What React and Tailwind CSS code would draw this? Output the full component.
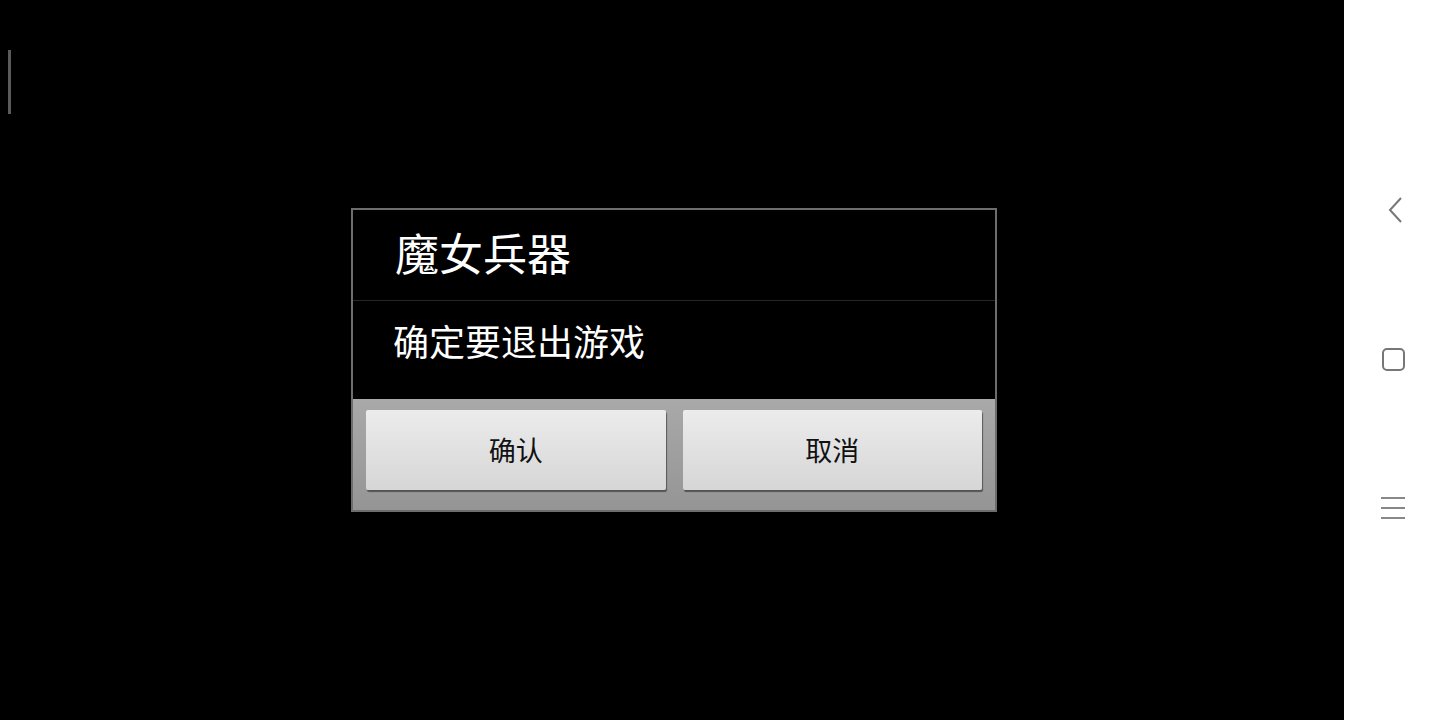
const font = { fontFamily: '"Noto Sans CJK SC", "Noto Sans", sans-serif' };

const DialogButton = ({ label }) => (
    <div className="flex h-[80px] flex-1 items-center justify-center rounded-[2px] bg-gradient-to-b from-[#ececec] to-[#d6d6d6] shadow-[1px_2px_1px_rgba(0,0,0,0.45)]">
        <span className="text-[27px] text-[#111]">{label}</span>
    </div>
);

export default function App() {
    return (
        <div className="flex h-[720px] w-[1440px] overflow-hidden bg-black" style={font}>
            {/* game area */}
            <div className="relative flex-1 bg-black pl-[351px] pt-[208px]">
                <div className="absolute left-[8px] top-[50px] h-[64px] w-[3px] bg-[#5a5a5a]" />

                {/* exit dialog */}
                <div className="flex h-[304px] w-[646px] flex-col border-2 border-[#6d6d6d] bg-black">
                    <div className="flex h-[91px] items-center border-b border-[#262626] pb-[6px] pl-[42px]">
                        <span className="text-[44px] leading-none text-white">魔女兵器</span>
                    </div>
                    <div className="flex h-[98px] items-center pb-[20px] pl-[40px]">
                        <span className="text-[36px] leading-none text-white">确定要退出游戏</span>
                    </div>
                    <div className="flex flex-1 gap-[17px] bg-gradient-to-b from-[#a9a9a9] to-[#959595] px-[13px] pt-[11px]">
                        <DialogButton label="确认" />
                        <DialogButton label="取消" />
                    </div>
                </div>
            </div>

            {/* system nav bar */}
            <div className="flex w-[96px] flex-col items-center bg-white pt-[195px] text-[#777]">
                <svg width="30" height="30" viewBox="0 0 30 30" className="ml-[10px]" fill="none" stroke="currentColor" strokeWidth="2">
                    <path d="M19 3 L8 15 L19 27" />
                </svg>
                <div className="ml-[2px] mt-[123px] h-[23px] w-[23px] rounded-[5px] border-2 border-[#777]" />
                <div className="ml-[2px] mt-[126px] flex w-[24px] flex-col gap-[8px]">
                    <div className="h-[2px] bg-[#888]" />
                    <div className="h-[2px] bg-[#888]" />
                    <div className="h-[2px] bg-[#888]" />
                </div>
            </div>
        </div>
    );
}
